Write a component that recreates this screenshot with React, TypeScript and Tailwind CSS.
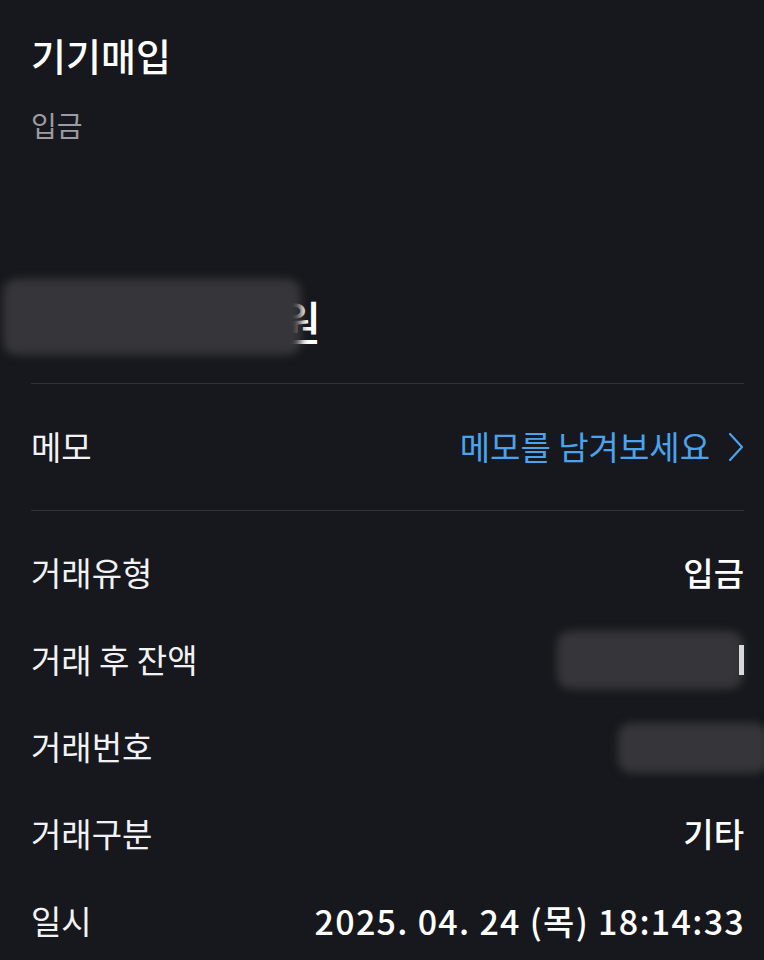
import React from 'react';

const font = { fontFamily: '"Noto Sans CJK KR", "Noto Sans", sans-serif' };

const Row: React.FC<{ label: string; children: React.ReactNode }> = ({ label, children }) => (
  <div className="h-[87px] flex items-center justify-between">
    <span className="text-[33px] text-[#f2f2f4]">{label}</span>
    {children}
  </div>
);

const Smudge: React.FC<{ className: string }> = ({ className }) => (
  <div className={`bg-[#36363a] rounded-[14px] blur-[4px] ${className}`} />
);

const App: React.FC = () => {
  return (
    <div className="min-h-[960px] bg-[#17181d] pl-[31px] pr-[20px] pt-[35px] overflow-hidden" style={font}>
      {/* Header */}
      <h1 className="text-[38px] leading-[40px] font-medium text-white">기기매입</h1>
      <p className="mt-[35px] text-[28px] leading-[30px] text-[#9b9ba0]">입금</p>

      {/* Amount (masked) */}
      <div className="mt-[137px] h-[80px] flex items-center -ml-[28px]">
        <Smudge className="w-[298px] h-[76px]" />
        <span className="-ml-[22px] mt-[6px] text-[46px] font-medium text-white leading-none">원</span>
      </div>

      <div className="mt-[26px] h-px bg-[#303136]" />

      {/* Memo */}
      <div className="h-[126px] flex items-center justify-between">
        <span className="text-[33px] text-[#f2f2f4]">메모</span>
        <div className="flex items-center gap-[18px]">
          <span className="text-[33px] text-[#4aa3ec]">메모를 남겨보세요</span>
          <svg width="16" height="30" viewBox="0 0 16 30" fill="none">
            <polyline points="2,2 14,15 2,28" stroke="#4aa3ec" strokeWidth="2.2" strokeLinecap="round" strokeLinejoin="round" />
          </svg>
        </div>
      </div>

      <div className="h-px bg-[#303136]" />

      {/* Details */}
      <div className="pt-[18px]">
        <Row label="거래유형">
          <span className="text-[33px] font-medium text-white">입금</span>
        </Row>
        <Row label="거래 후 잔액">
          <div className="flex items-center">
            <Smudge className="w-[186px] h-[58px]" />
            <span className="-ml-[4px] w-[5px] h-[30px] bg-[#d8d8d8] blur-[0.5px]" />
          </div>
        </Row>
        <Row label="거래번호">
          <Smudge className="w-[150px] h-[50px] -mr-[24px] mt-[2px]" />
        </Row>
        <Row label="거래구분">
          <span className="text-[33px] font-medium text-white">기타</span>
        </Row>
        <Row label="일시">
          <span className="text-[34px] font-medium text-white tracking-[1.3px] -mr-[1px]">2025. 04. 24 (목) 18:14:33</span>
        </Row>
      </div>
    </div>
  );
};

export default App;
